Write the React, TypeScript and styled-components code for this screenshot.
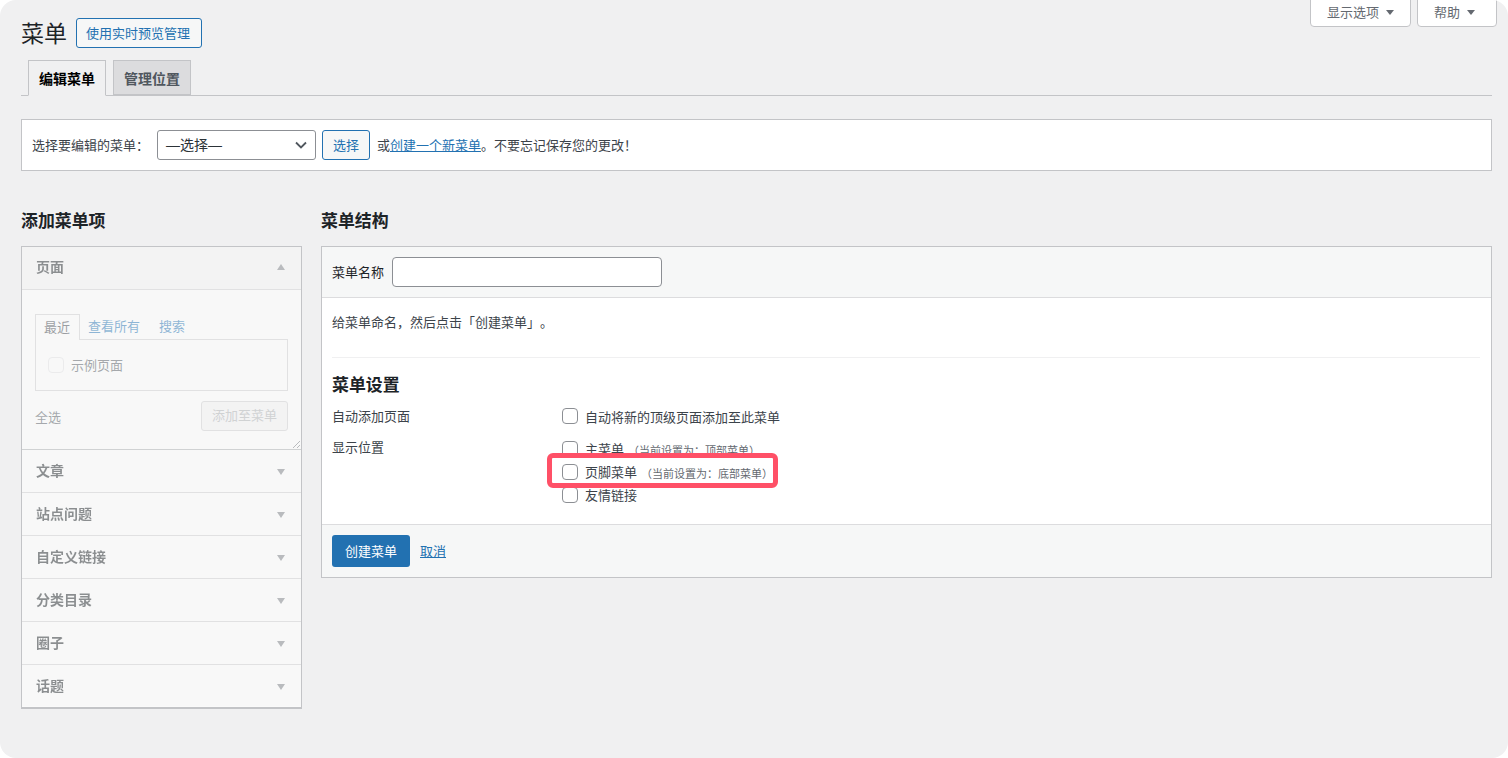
import React from "react";
import styled, { createGlobalStyle } from "styled-components";

const Global = createGlobalStyle`
  html, body { margin: 0; padding: 0; background: #fff; }
  body { font-family: "Noto Sans CJK SC", "Liberation Sans", sans-serif; font-size: 13px; color: #3c434a; }
  * { box-sizing: border-box; }
`;

const Page = styled.div`
  width: 1508px; height: 758px; background: #f0f0f1; border-radius: 16px; overflow: hidden;
  padding: 0 16px 0 21px; line-height: 20px;
`;
const Header = styled.div`display: flex; align-items: flex-start; height: 60px;`;
const Title = styled.h1`margin: 17px 9px 0 0; font-size: 23px; line-height: 30px; font-weight: 400; color: #1d2327;`;
const OutlineButton = styled.button`
  font: inherit; height: 30px; padding: 0 10px; border: 1px solid #2271b1; border-radius: 3px;
  background: #f6f7f7; color: #2271b1; line-height: 28px;
`;
const PreviewButton = styled(OutlineButton)`margin-top: 18px; padding: 0 11px 0 9px;`;
const Meta = styled.div`display: flex; gap: 6px; margin-left: auto; margin-right: -5px;`;
const MetaTab = styled.div<{ $width: number }>`
  width: ${(p) => p.$width}px; height: 28px; margin-top: -1px; padding: 0 0 3px 16px; display: flex; align-items: center; gap: 7px; background: #fff; color: #646970;
  border: 1px solid #c3c4c7; border-radius: 0 0 4px 4px;
`;
const Caret = styled.i`width: 0; height: 0; margin-top: 2px; border: solid transparent; border-width: 5px 4px 0; border-top-color: #646970;`;
const TabBar = styled.div`display: flex; gap: 7px; height: 36px; padding-left: 7px; border-bottom: 1px solid #c3c4c7;`;
const NavTab = styled.div<{ $active?: boolean }>`
  height: ${(p) => (p.$active ? 36 : 35)}px; padding: 0 10px; font-size: 14px; line-height: 34px; font-weight: 600;
  border: 1px solid #c3c4c7; background: ${(p) => (p.$active ? "#f0f0f1" : "#dcdcde")};
  color: ${(p) => (p.$active ? "#000" : "#50575e")};
  ${(p) => p.$active && "border-bottom-color: #f0f0f1;"}
`;
const ManageBar = styled.div`
  margin-top: 23px; height: 52px; display: flex; align-items: center; padding: 0 10px; background: #fff; border: 1px solid #c3c4c7;
`;
const ManageLabel = styled.span`width: 125px;`;
const FakeSelect = styled.div`
  width: 159px; height: 30px; padding: 0 8px; display: flex; align-items: center; justify-content: space-between;
  border: 1px solid #8c8f94; border-radius: 3px; background: #fff; color: #2c3338; font-size: 14px;
`;
const SelectValue = styled.span`font-family: "Liberation Sans", "Noto Sans CJK SC", sans-serif; margin-top: -1px;`;
const SelectButton = styled(OutlineButton)`margin: 0 7px 0 6px; width: 48px; padding: 0;`;
const Link = styled.a`color: #2271b1; text-decoration: underline;`;
const Columns = styled.div`display: flex; gap: 19px; margin-top: 37px;`;
const LeftCol = styled.div`width: 281px;`;
const RightCol = styled.div`flex: 1;`;
const SectionTitle = styled.h2`margin: 0 0 15px; font-size: 16.9px; line-height: 23px; font-weight: 600; color: #1d2327;`;
const Accordion = styled.div`background: #fafafa; border: 1px solid #c3c4c7; border-bottom-width: 2px; height: 463px;`;
const Disabled = styled.div`opacity: 0.5; height: 100%;`;
const AccHead = styled.div<{ $open?: boolean }>`
  height: 43px; padding: 0 14px ${(p) => (p.$open ? 4 : 2)}px; display: flex; align-items: center; justify-content: space-between;
  font-size: 14px; font-weight: 600; color: #1d2327;
  background: ${(p) => (p.$open ? "#ececec" : "#f6f7f7")};
  border-bottom: 1px solid #c8c8ca;
  &:last-child { border-bottom: 0; height: 41px; }
`;
const Arrow = styled.i<{ $up?: boolean }>`
  width: 0; height: 0; margin-right: 2px; margin-top: ${(p) => (p.$up ? 2 : 4)}px; border: solid transparent;
  border-width: ${(p) => (p.$up ? "0 4px 6px" : "6px 4px 0")};
  ${(p) => (p.$up ? "border-bottom-color: #787c82;" : "border-top-color: #787c82;")}
`;
const AccBody = styled.div`
  position: relative; height: 160px; padding: 24px 13px 0; background: #f6f7f7; border-bottom: 1px solid #a7aaad;
`;
const InnerTabs = styled.div`display: flex; align-items: flex-end; height: 25px; line-height: 24px;`;
const InnerTab = styled.span<{ $active?: boolean }>`
  ${(p) =>
    p.$active
      ? `height: 26px; margin-bottom: -1px; width: 45px; padding-left: 8px; border: 1px solid #c8c8ca; border-bottom: 0; background: #f6f7f7; position: relative; z-index: 1;`
      : `color: #2271b1; margin-left: 8px; margin-right: 11px; height: 25px;`}
`;
const InnerBox = styled.div`
  height: 52px; padding: 0 12px; display: flex; align-items: center; gap: 7px; border: 1px solid #c8c8ca; color: #50575e;
`;
const Check = styled.span<{ $faint?: boolean }>`
  display: block; flex: none; width: 16px; height: 16px; border: 1px solid ${(p) => (p.$faint ? "#dcdcde" : "#8c8f94")}; border-radius: 4px; background: ${(p) => (p.$faint ? "transparent" : "#fff")};
`;
const AccActions = styled.div`display: flex; justify-content: space-between; margin-top: 10px;`;
const SelectAll = styled.span`margin-top: 6px; color: #50575e;`;
const AddButton = styled.div`
  width: 87px; height: 30px; line-height: 26px; text-align: center; border: 1px solid #c8c8ca; border-radius: 3px; background: #ececec; color: #a7aaad;
`;
const Grip = styled.svg`position: absolute; right: 1px; bottom: 1px; width: 7px; height: 7px;`;
const Panel = styled.div`height: 332px; display: flex; flex-direction: column; background: #fff; border: 1px solid #c3c4c7;`;
const PanelHead = styled.div`
  height: 51px; flex: none; padding: 0 10px; display: flex; align-items: center; gap: 8px; background: #f6f7f7; border-bottom: 1px solid #dcdcde; color: #1d2327;
`;
const NameInput = styled.input`width: 270px; height: 30px; border: 1px solid #8c8f94; border-radius: 4px; background: #fff;`;
const PanelBody = styled.div`flex: 1; padding: 14px 10px 0;`;
const Hint = styled.p`margin: 0; line-height: 20px; color: #3c434a; text-spacing-trim: space-all;`;
const Rule = styled.hr`margin: 25px 1px 0 0; border: 0; border-top: 1px solid #f0f0f1;`;
const SettingsTitle = styled.h3`margin: 14px 0 0; font-size: 16.9px; line-height: 24px; font-weight: 600; color: #1d2327;`;
const SettingRow = styled.div<{ $gap: number }>`display: flex; margin-top: ${(p) => p.$gap}px;`;
const SettingsLabel = styled.div<{ $shift: number }>`width: 230px; flex: none; margin-top: ${(p) => p.$shift}px; line-height: 18px; color: #3c434a;`;
const Options = styled.div`display: flex; flex-direction: column; gap: 7px;`;
const OptionLine = styled.label<{ $marked?: boolean }>`
  position: relative; display: flex; align-items: center; gap: 7px; height: 16px; color: #3c434a;
  ${(p) => p.$marked && `
    z-index: 1;
    &::before { content: ""; position: absolute; box-sizing: border-box; left: -15px; top: -11px; width: 231px; height: 35px; background: #fff; border: 5.5px solid #ff5067; border-radius: 6px; }
    & > * { position: relative; }
  `}
`;
const OptionText = styled.span<{ $drop?: boolean }>`margin-top: ${(p) => (p.$drop ? 1 : 0)}px;`;
const Note = styled.small`font-size: 11px; margin: 1px 0 0 -3px; color: #646970;`;
const PanelFoot = styled.div`
  height: 53px; flex: none; padding: 10px 10px 0; display: flex; align-items: flex-start; gap: 10px; background: #f6f7f7; border-top: 1px solid #dcdcde;
`;
const Primary = styled.div`width: 78px; height: 32px; line-height: 32px; text-align: center; color: #fff; background: #2271b1; border-radius: 3px;`;
const Cancel = styled(Link)`line-height: 32px;`;

const closed = ["文章", "站点问题", "自定义链接", "分类目录", "圈子", "话题"];
const Opt = ({ label, note, marked, drop }: { label: string; note?: string; marked?: boolean; drop?: boolean }) => (
  <OptionLine $marked={marked}>
    <Check />
    <OptionText $drop={drop}>{label}</OptionText>
    {note && <Note>{note}</Note>}
  </OptionLine>
);

export default function App() {
  return (
    <Page>
      <Global />
      <Header>
        <Title>菜单</Title>
        <PreviewButton>使用实时预览管理</PreviewButton>
        <Meta>
          <MetaTab $width={101}>显示选项 <Caret /></MetaTab>
          <MetaTab $width={80}>帮助 <Caret /></MetaTab>
        </Meta>
      </Header>
      <TabBar>
        <NavTab $active>编辑菜单</NavTab>
        <NavTab>管理位置</NavTab>
      </TabBar>
      <ManageBar>
        <ManageLabel>选择要编辑的菜单：</ManageLabel>
        <FakeSelect>
          <SelectValue>—选择—</SelectValue>
          <svg width="12" height="8" viewBox="0 0 12 8"><path d="M1 1.5l5 5 5-5" fill="none" stroke="#50575e" strokeWidth="1.8" /></svg>
        </FakeSelect>
        <SelectButton>选择</SelectButton>
        <span>或<Link>创建一个新菜单</Link>。不要忘记保存您的更改！</span>
      </ManageBar>
      <Columns>
        <LeftCol>
          <SectionTitle>添加菜单项</SectionTitle>
          <Accordion>
            <Disabled>
              <AccHead $open>页面 <Arrow $up /></AccHead>
              <AccBody>
                <InnerTabs>
                  <InnerTab $active>最近</InnerTab>
                  <InnerTab>查看所有</InnerTab>
                  <InnerTab>搜索</InnerTab>
                </InnerTabs>
                <InnerBox><Check $faint />示例页面</InnerBox>
                <AccActions>
                  <SelectAll>全选</SelectAll>
                  <AddButton>添加至菜单</AddButton>
                </AccActions>
                <Grip viewBox="0 0 7 7"><path d="M0 7L7 0M4 7l3-3" stroke="#787c82" strokeWidth="1" /></Grip>
              </AccBody>
              {closed.map((t) => (
                <AccHead key={t}>{t} <Arrow /></AccHead>
              ))}
            </Disabled>
          </Accordion>
        </LeftCol>
        <RightCol>
          <SectionTitle>菜单结构</SectionTitle>
          <Panel>
            <PanelHead>菜单名称 <NameInput /></PanelHead>
            <PanelBody>
              <Hint>给菜单命名，然后点击「创建菜单」。</Hint>
              <Rule />
              <SettingsTitle>菜单设置</SettingsTitle>
              <SettingRow $gap={12}>
                <SettingsLabel $shift={-1}>自动添加页面</SettingsLabel>
                <Options><Opt label="自动将新的顶级页面添加至此菜单" drop /></Options>
              </SettingRow>
              <SettingRow $gap={16}>
                <SettingsLabel $shift={-3}>显示位置</SettingsLabel>
                <Options>
                  <Opt label="主菜单" note="（当前设置为：顶部菜单）" />
                  <Opt label="页脚菜单" note="（当前设置为：底部菜单）" marked />
                  <Opt label="友情链接" />
                </Options>
              </SettingRow>
            </PanelBody>
            <PanelFoot>
              <Primary>创建菜单</Primary>
              <Cancel>取消</Cancel>
            </PanelFoot>
          </Panel>
        </RightCol>
      </Columns>
    </Page>
  );
}
